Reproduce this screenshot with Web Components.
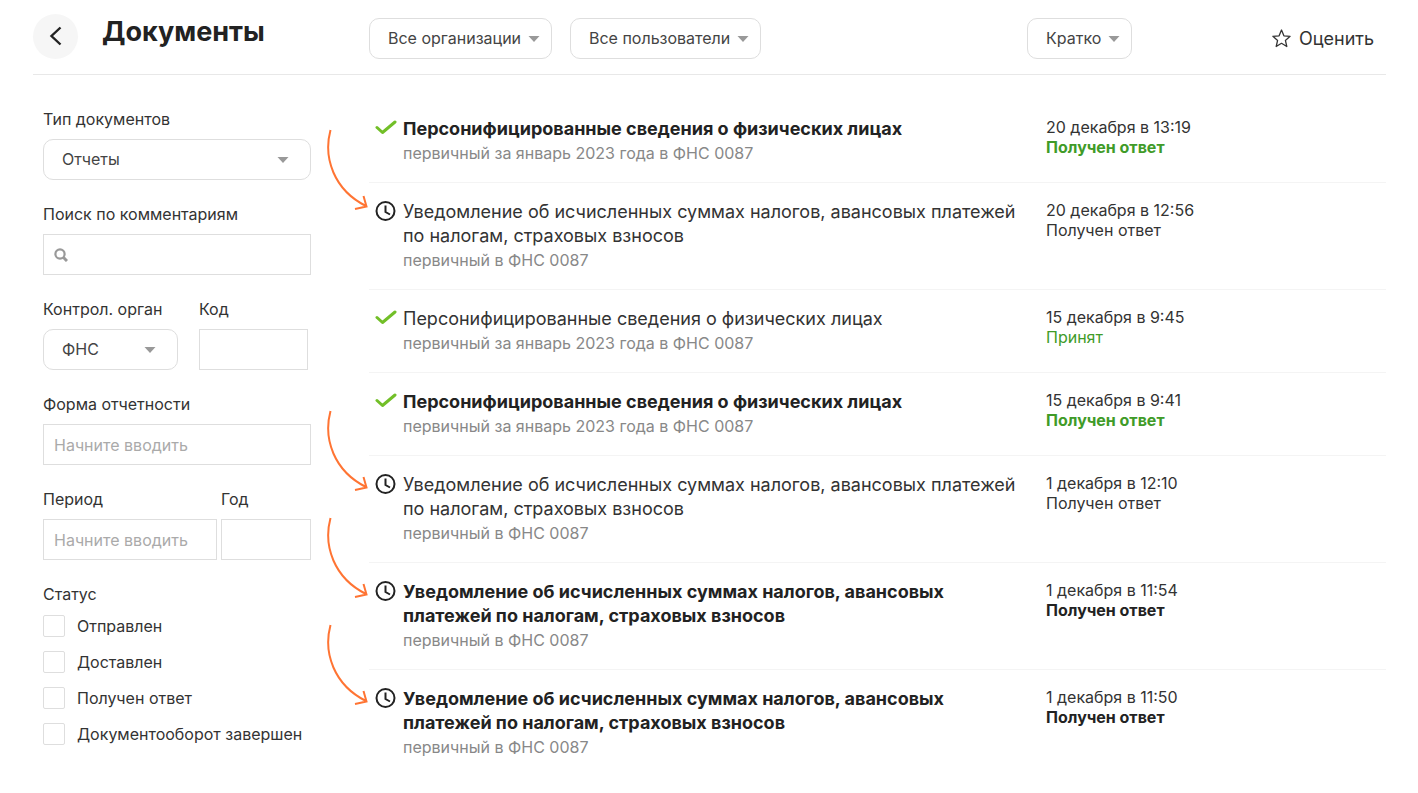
<!DOCTYPE html>
<html lang="ru">
<head>
<meta charset="utf-8">
<title>Документы</title>
<style>
body {
  margin: 0;
  background: #fff;
  color: #333;
  font: 16px/20px Inter, "Liberation Sans", sans-serif;
}
</style>
</head>
<body>
<docs-page></docs-page>

<script>
const define = (name, html, setup) => {
  const template = document.createElement("template");
  template.innerHTML = html;
  customElements.define(name, class extends HTMLElement {
    constructor() {
      super();
      this.attachShadow({mode: "open"});
      this.shadowRoot.appendChild(template.content.cloneNode(true));
    }
    connectedCallback() {
      if ( setup ) setup(this, this.shadowRoot);
    }
  });
};

define("docs-select", `
<style>
:host {
  display: block;
}
label {
  display: block;
  margin-bottom: 10px;
}
label:empty {
  display: none;
}
.box {
  display: grid;
  align-items: center;
}
select, svg {
  grid-area: 1 / 1;
}
select {
  appearance: none;
  box-sizing: border-box;
  width: 100%;
  height: 41px;
  padding: 0 29px 2px 18px;
  border: 1px solid #dedede;
  border-radius: 10px;
  background: #fff;
  color: #444;
  font: inherit;
}
svg {
  justify-self: end;
  margin-right: var(--caret-right, 12px);
  pointer-events: none;
}
</style>

<label for="field"></label>
<div class="box">
<select id="field"></select>
<svg width="12" height="6"><path d="M0.5 0h11L6 6z" fill="#999"/></svg>
</div>
`, (host, root) => {
  root.querySelector("select").innerHTML = "<option>" + host.getAttribute("value") + "</option>";
  if ( host.hasAttribute("label") ) {
    root.querySelector("label").textContent = host.getAttribute("label");
  } else {
    root.querySelector("select").setAttribute("aria-label", host.getAttribute("name"));
  }
});

define("docs-input", `
<style>
:host {
  display: block;
}
label {
  display: block;
  margin-bottom: 10px;
}
.box {
  display: flex;
  align-items: center;
  box-sizing: border-box;
  height: 41px;
  border: 1px solid #dedede;
  padding: 0 10px;
}
input {
  flex: 1;
  min-width: 0;
  height: 100%;
  padding: 0;
  border: 0;
  outline: 0;
  background: none;
  color: inherit;
  font: inherit;
}
input::placeholder {
  color: #aaa;
  opacity: 1;
}
</style>

<label for="field"></label>
<div class="box"><slot></slot><input id="field" type="text"></div>
`, (host, root) => {
  root.querySelector("label").textContent = host.getAttribute("label");
  root.querySelector("input").placeholder = host.getAttribute("placeholder") || "";
});

define("docs-check", `
<style>
:host {
  display: block;
}
label {
  display: flex;
  align-items: center;
  gap: 12px;
}
input {
  appearance: none;
  box-sizing: border-box;
  width: 22px;
  height: 22px;
  margin: 0;
  border: 1px solid #dedede;
  border-radius: 2px;
}
input:checked {
  background: #72bf28;
}
</style>

<label><input type="checkbox"><slot></slot></label>
`);

define("docs-header", `
<style>
:host {
  display: grid;
  grid-template-columns: 336px 1fr 359px;
  align-items: center;
  height: 74px;
  border-bottom: 1px solid #e8e8e8;
}
.title, .filters, .tools {
  display: flex;
  align-items: center;
}
.title {
  gap: 24px;
  padding-bottom: 2px;
}
.filters {
  gap: 18px;
  padding-top: 3px;
}
.tools {
  justify-content: space-between;
  padding: 3px 12px 0 0;
}
h1 {
  margin: 0 0 8px;
  color: #222;
  font-size: 27px;
  line-height: 36px;
}
button {
  padding: 0;
  border: 0;
  background: none;
  color: inherit;
  font: inherit;
  cursor: pointer;
}
.back {
  display: grid;
  place-items: center;
  width: 45px;
  height: 45px;
  border-radius: 50%;
  background: #f6f6f6;
}
.rate {
  display: flex;
  align-items: center;
  gap: 8px;
  font-size: 18px;
}
</style>

<div class="title">
<button class="back" aria-label="Назад">
<svg width="14" height="20" fill="none" stroke="#222" stroke-width="2.400"><path d="M11.500 1.500L2.500 10l9 8.500"/></svg>
</button>
<h1>Документы</h1>
</div>
<div class="filters">
<docs-select name="Организации" value="Все организации"></docs-select>
<docs-select name="Пользователи" value="Все пользователи"></docs-select>
</div>
<div class="tools">
<docs-select name="Вид" value="Кратко"></docs-select>
<button class="rate">
<svg width="19" height="19" viewBox="0 0 19 19" fill="none" stroke="#333" stroke-width="1.3" stroke-linejoin="round"><path d="M9.5 1l2.4 5.8 6.2.5-4.7 4.1 1.4 6.1-5.3-3.2-5.3 3.2 1.4-6.1L.9 7.3l6.2-.5z"/></svg>
Оценить
</button>
</div>
`);

define("docs-filters", `
<style>
:host {
  display: flex;
  flex-direction: column;
  gap: 24px;
}
.row {
  display: grid;
}
.organ {
  grid-template-columns: 135px 109px;
  gap: 21px;
}
.period {
  grid-template-columns: 174px 90px;
  gap: 4px;
}
.wide {
  --caret-right: 22px;
}
fieldset {
  display: flex;
  flex-direction: column;
  gap: 14px;
  margin: 0;
  padding: 0;
  border: 0;
}
legend {
  margin-bottom: 11px;
  padding: 0;
}
</style>

<docs-select class="wide" label="Тип документов" value="Отчеты"></docs-select>
<docs-input label="Поиск по комментариям">
<svg width="14" height="14" viewBox="0 0 14 14" fill="none" stroke="#999"><circle cx="6" cy="6" r="4.6" stroke-width="2.2"/><path d="M9.5 9.5l3.5 3.5" stroke-width="3"/></svg>
</docs-input>
<div class="row organ">
<docs-select class="wide" label="Контрол. орган" value="ФНС"></docs-select>
<docs-input label="Код"></docs-input>
</div>
<docs-input label="Форма отчетности" placeholder="Начните вводить"></docs-input>
<div class="row period">
<docs-input label="Период" placeholder="Начните вводить"></docs-input>
<docs-input label="Год"></docs-input>
</div>
<fieldset>
<legend>Статус</legend>
<docs-check>Отправлен</docs-check>
<docs-check>Доставлен</docs-check>
<docs-check>Получен ответ</docs-check>
<docs-check>Документооборот завершен</docs-check>
</fieldset>
`);

// curved pointer from the previous report down to its notification
define("flow-arrow", `
<style>
:host {
  position: absolute;
  left: -43px;
  top: -46px;
}
:host([from="far"]) {
  top: -54px;
}
svg {
  display: block;
}
</style>

<svg width="44" height="84" fill="none" stroke="#ff7433" stroke-width="2"><path d="M4.500 1C-3 29 8 61 40 77M37.500 67L40.500 77.500 29 80"/></svg>
`);

const icons = {
  done: `<svg width="22" height="22" fill="none" stroke="#72bf28" stroke-width="3" stroke-linecap="round" stroke-linejoin="round"><path d="M2 10.500L7.500 15.500 20 5"/></svg>`,
  wait: `<svg width="22" height="22" fill="none" stroke="#222" stroke-width="2"><circle cx="10.500" cy="11" r="9"/><path d="M10.500 5.500V12l4.500 2.500"/></svg>`
};

define("docs-item", `
<style>
:host {
  position: relative;
  display: grid;
  grid-template-columns: 22px 1fr 340px;
  padding: 17px 0 17px 6px;
  border-bottom: 1px solid #f4f4f4;
}
:host(:last-child) {
  border-bottom: 0;
}
.icon svg {
  display: block;
}
.text {
  padding: 0 30px 0 6px;
}
h2 {
  margin: 0;
  color: #333;
  font-size: 18px;
  font-weight: 400;
  line-height: 24px;
}
p {
  margin: 0;
}
.note {
  color: #888;
  line-height: 24px;
}
:host([unread]) h2, :host([unread]) .status {
  color: #222;
  font-weight: 700;
}
:host([ok]) .status {
  color: #409b28;
}
</style>

<span class="icon"></span>
<div class="text">
<h2><slot></slot></h2>
<p class="note"><slot name="note"></slot></p>
</div>
<div class="meta">
<p><slot name="date"></slot></p>
<p class="status"><slot name="status"></slot></p>
</div>
<slot name="arrow"></slot>
`, (host, root) => {
  root.querySelector(".icon").innerHTML = icons[host.getAttribute("icon")];
});

const persons = "Персонифицированные сведения о физических лицах";
const taxes = "Уведомление об исчисленных суммах налогов, авансовых платежей по налогам, страховых взносов";
const docs = [
  {icon: "done", title: persons, date: "20 декабря в 13:19", status: "Получен ответ", flags: "ok unread"},
  {icon: "wait", title: taxes, date: "20 декабря в 12:56", status: "Получен ответ", flags: "", arrow: "far"},
  {icon: "done", title: persons, date: "15 декабря в 9:45", status: "Принят", flags: "ok"},
  {icon: "done", title: persons, date: "15 декабря в 9:41", status: "Получен ответ", flags: "ok unread"},
  {icon: "wait", title: taxes, date: "1 декабря в 12:10", status: "Получен ответ", flags: "", arrow: "near"},
  {icon: "wait", title: taxes, date: "1 декабря в 11:54", status: "Получен ответ", flags: "unread", arrow: "near"},
  {icon: "wait", title: taxes, date: "1 декабря в 11:50", status: "Получен ответ", flags: "unread", arrow: "near"}
];

define("docs-list", `
<style>
:host {
  display: block;
}
</style>
`, (host, root) => {
  for ( const doc of docs ) {
    const note = doc.icon === "done" ? "первичный за январь 2023 года в ФНС 0087" : "первичный в ФНС 0087";
    const arrow = doc.arrow ? `<flow-arrow slot="arrow" from="${doc.arrow}"></flow-arrow>` : "";
    root.innerHTML += `<docs-item icon="${doc.icon}" ${doc.flags}>${doc.title}\
<span slot="note">${note}</span>\
<span slot="date">${doc.date}</span>\
<span slot="status">${doc.status}</span>${arrow}</docs-item>`;
  }
});

define("docs-page", `
<style>
:host {
  display: block;
  padding: 0 32px 0 33px;
}
main {
  display: grid;
  grid-template-columns: 268px 1fr;
  gap: 58px;
  padding: 25px 0 0 10px;
}
docs-filters {
  padding-top: 9px;
}
</style>

<docs-header></docs-header>
<main>
<docs-filters></docs-filters>
<docs-list></docs-list>
</main>
`);
</script>
</body>
</html>
